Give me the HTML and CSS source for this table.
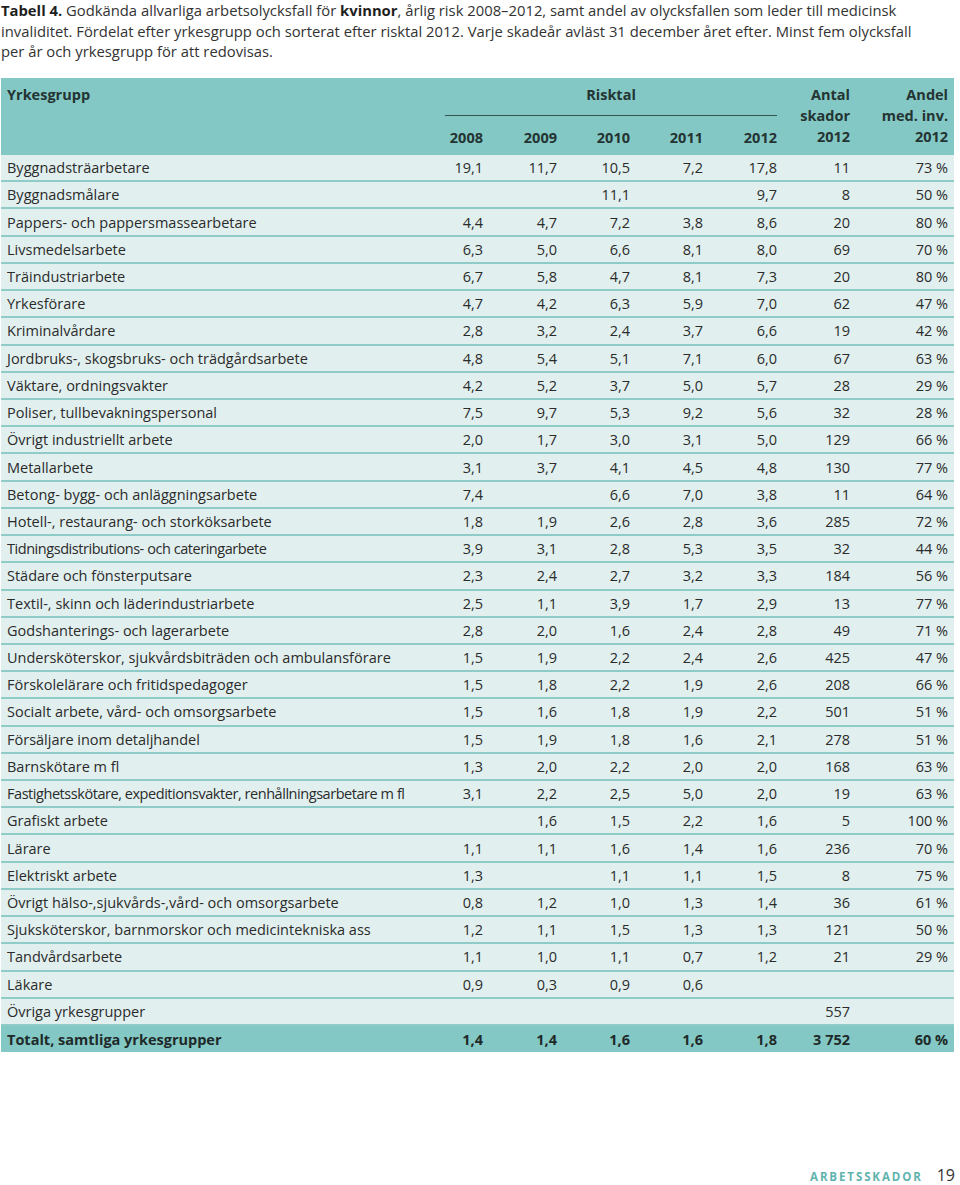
FILE: index.html
```html
<!DOCTYPE html>
<html lang="sv">
<head>
<meta charset="utf-8">
<title>Tabell 4</title>
<link rel="stylesheet" href="styles.css">
</head>
<body>
<div class="page">
  <p class="caption"><b>Tabell 4.</b> Godkända allvarliga arbetsolycksfall för <b>kvinnor</b>, årlig risk 2008–2012, samt andel av olycksfallen som leder till medicinsk invaliditet. Fördelat efter yrkesgrupp och sorterat efter risktal 2012. Varje skadeår avläst 31 december året efter. Minst fem olycksfall per år och yrkesgrupp för att redovisas.</p>
  <table class="tbl">
    <colgroup>
      <col class="c-name"><col class="c-y"><col class="c-y2"><col class="c-y"><col class="c-y"><col class="c-y2"><col class="c-y"><col class="c-andel">
    </colgroup>
    <thead>
      <tr class="head">
        <th class="name">Yrkesgrupp</th>
        <th colspan="5" class="risk">
          <div class="risk-label">Risktal</div>
          <div class="years"><span>2008</span><span>2009</span><span>2010</span><span>2011</span><span>2012</span></div>
        </th>
        <th class="stack">Antal<br>skador<br>2012</th>
        <th class="stack">Andel<br>med. inv.<br>2012</th>
      </tr>
    </thead>
    <tbody>
      <tr><td>Byggnadsträarbetare</td><td>19,1</td><td>11,7</td><td>10,5</td><td>7,2</td><td>17,8</td><td>11</td><td>73 %</td></tr>
      <tr><td>Byggnadsmålare</td><td></td><td></td><td>11,1</td><td></td><td>9,7</td><td>8</td><td>50 %</td></tr>
      <tr><td>Pappers- och pappersmassearbetare</td><td>4,4</td><td>4,7</td><td>7,2</td><td>3,8</td><td>8,6</td><td>20</td><td>80 %</td></tr>
      <tr><td>Livsmedelsarbete</td><td>6,3</td><td>5,0</td><td>6,6</td><td>8,1</td><td>8,0</td><td>69</td><td>70 %</td></tr>
      <tr><td>Träindustriarbete</td><td>6,7</td><td>5,8</td><td>4,7</td><td>8,1</td><td>7,3</td><td>20</td><td>80 %</td></tr>
      <tr><td>Yrkesförare</td><td>4,7</td><td>4,2</td><td>6,3</td><td>5,9</td><td>7,0</td><td>62</td><td>47 %</td></tr>
      <tr><td>Kriminalvårdare</td><td>2,8</td><td>3,2</td><td>2,4</td><td>3,7</td><td>6,6</td><td>19</td><td>42 %</td></tr>
      <tr><td>Jordbruks-, skogsbruks- och trädgårdsarbete</td><td>4,8</td><td>5,4</td><td>5,1</td><td>7,1</td><td>6,0</td><td>67</td><td>63 %</td></tr>
      <tr><td>Väktare, ordningsvakter</td><td>4,2</td><td>5,2</td><td>3,7</td><td>5,0</td><td>5,7</td><td>28</td><td>29 %</td></tr>
      <tr><td>Poliser, tullbevakningspersonal</td><td>7,5</td><td>9,7</td><td>5,3</td><td>9,2</td><td>5,6</td><td>32</td><td>28 %</td></tr>
      <tr><td>Övrigt industriellt arbete</td><td>2,0</td><td>1,7</td><td>3,0</td><td>3,1</td><td>5,0</td><td>129</td><td>66 %</td></tr>
      <tr><td>Metallarbete</td><td>3,1</td><td>3,7</td><td>4,1</td><td>4,5</td><td>4,8</td><td>130</td><td>77 %</td></tr>
      <tr><td>Betong- bygg- och anläggningsarbete</td><td>7,4</td><td></td><td>6,6</td><td>7,0</td><td>3,8</td><td>11</td><td>64 %</td></tr>
      <tr><td>Hotell-, restaurang- och storköksarbete</td><td>1,8</td><td>1,9</td><td>2,6</td><td>2,8</td><td>3,6</td><td>285</td><td>72 %</td></tr>
      <tr><td class="cond">Tidningsdistributions- och cateringarbete</td><td>3,9</td><td>3,1</td><td>2,8</td><td>5,3</td><td>3,5</td><td>32</td><td>44 %</td></tr>
      <tr><td>Städare och fönsterputsare</td><td>2,3</td><td>2,4</td><td>2,7</td><td>3,2</td><td>3,3</td><td>184</td><td>56 %</td></tr>
      <tr><td>Textil-, skinn och läderindustriarbete</td><td>2,5</td><td>1,1</td><td>3,9</td><td>1,7</td><td>2,9</td><td>13</td><td>77 %</td></tr>
      <tr><td>Godshanterings- och lagerarbete</td><td>2,8</td><td>2,0</td><td>1,6</td><td>2,4</td><td>2,8</td><td>49</td><td>71 %</td></tr>
      <tr><td>Undersköterskor, sjukvårdsbiträden och ambulansförare</td><td>1,5</td><td>1,9</td><td>2,2</td><td>2,4</td><td>2,6</td><td>425</td><td>47 %</td></tr>
      <tr><td>Förskolelärare och fritidspedagoger</td><td>1,5</td><td>1,8</td><td>2,2</td><td>1,9</td><td>2,6</td><td>208</td><td>66 %</td></tr>
      <tr><td>Socialt arbete, vård- och omsorgsarbete</td><td>1,5</td><td>1,6</td><td>1,8</td><td>1,9</td><td>2,2</td><td>501</td><td>51 %</td></tr>
      <tr><td>Försäljare inom detaljhandel</td><td>1,5</td><td>1,9</td><td>1,8</td><td>1,6</td><td>2,1</td><td>278</td><td>51 %</td></tr>
      <tr><td>Barnskötare m fl</td><td>1,3</td><td>2,0</td><td>2,2</td><td>2,0</td><td>2,0</td><td>168</td><td>63 %</td></tr>
      <tr><td class="cond">Fastighetsskötare, expeditionsvakter, renhållningsarbetare m fl</td><td>3,1</td><td>2,2</td><td>2,5</td><td>5,0</td><td>2,0</td><td>19</td><td>63 %</td></tr>
      <tr><td>Grafiskt arbete</td><td></td><td>1,6</td><td>1,5</td><td>2,2</td><td>1,6</td><td>5</td><td>100 %</td></tr>
      <tr><td>Lärare</td><td>1,1</td><td>1,1</td><td>1,6</td><td>1,4</td><td>1,6</td><td>236</td><td>70 %</td></tr>
      <tr><td>Elektriskt arbete</td><td>1,3</td><td></td><td>1,1</td><td>1,1</td><td>1,5</td><td>8</td><td>75 %</td></tr>
      <tr><td>Övrigt hälso-,sjukvårds-,vård- och omsorgsarbete</td><td>0,8</td><td>1,2</td><td>1,0</td><td>1,3</td><td>1,4</td><td>36</td><td>61 %</td></tr>
      <tr><td>Sjuksköterskor, barnmorskor och medicintekniska ass</td><td>1,2</td><td>1,1</td><td>1,5</td><td>1,3</td><td>1,3</td><td>121</td><td>50 %</td></tr>
      <tr><td>Tandvårdsarbete</td><td>1,1</td><td>1,0</td><td>1,1</td><td>0,7</td><td>1,2</td><td>21</td><td>29 %</td></tr>
      <tr><td>Läkare</td><td>0,9</td><td>0,3</td><td>0,9</td><td>0,6</td><td></td><td></td><td></td></tr>
      <tr><td>Övriga yrkesgrupper</td><td></td><td></td><td></td><td></td><td></td><td>557</td><td></td></tr>
      <tr class="total"><td>Totalt, samtliga yrkesgrupper</td><td>1,4</td><td>1,4</td><td>1,6</td><td>1,6</td><td>1,8</td><td>3 752</td><td>60 %</td></tr>
    </tbody>
  </table>
  <div class="footer"><span class="section">ARBETSSKADOR</span><span class="pageno">19</span></div>
</div>
</body>
</html>
```
FILE: styles.css
```css
html, body {
  margin: 0;
  padding: 0;
  background: #ffffff;
}
body {
  font-family: "Open Sans", "Noto Sans", sans-serif;
  color: #2b2b2b;
}
.page {
  width: 960px;
  height: 1185px;
  position: relative;
}
.caption {
  margin: 0;
  padding: 0 0 0 1px;
  font-size: 14.8px;
  line-height: 20.5px;
  color: #333333;
  width: 930px;
}
.caption b {
  font-weight: 700;
  color: #1f1f1f;
}
.tbl {
  margin-top: 16px;
  margin-left: 1px;
  width: 953px;
  table-layout: fixed;
  border-collapse: collapse;
  font-size: 14.5px;
}
.c-name { width: 415px; }
.c-y { width: 73px; }
.c-y2 { width: 74px; }
.c-andel { width: 98px; }
.tbl th {
  background: #83c8c4;
  font-weight: 700;
  color: #243433;
  text-align: right;
  padding: 6px 6px 0 0;
  line-height: 21px;
  vertical-align: top;
}
.tbl th.name {
  text-align: left;
  padding-left: 6px;
}
.tbl th.risk {
  text-align: center;
  padding: 6px 0 7px 0;
}
.risk-label {
  margin: 0 6px 0 29px;
  padding-bottom: 10px;
  border-bottom: 1.5px solid #2f5553;
}
.years {
  display: grid;
  grid-template-columns: 73px 74px 73px 73px 74px;
  margin-top: 11.5px;
}
.years span {
  text-align: right;
  padding-right: 6px;
}
.tbl th.stack {
  vertical-align: bottom;
  padding-bottom: 8px;
}
.tbl td {
  background: #e1f0ef;
  border-bottom: 2.2px solid #8fcbc7;
  height: 25.23px;
  padding: 0 6px 0 0;
  text-align: right;
  color: #2b2b2b;
  white-space: nowrap;
}
.tbl td:first-child {
  text-align: left;
  padding-left: 6px;
}
.tbl td.cond {
  letter-spacing: -0.45px;
}
.tbl tr.total td {
  background: #83c8c4;
  font-weight: 700;
  color: #1f2a2a;
  border-bottom: none;
  height: 26px;
}
.footer {
  position: absolute;
  right: 5px;
  bottom: -1px;
  display: flex;
  align-items: baseline;
  gap: 14px;
}
.section {
  font-size: 11.5px;
  font-weight: 700;
  letter-spacing: 1.9px;
  color: #5fb3ae;
}
.pageno {
  font-size: 16px;
  color: #333333;
}
```
